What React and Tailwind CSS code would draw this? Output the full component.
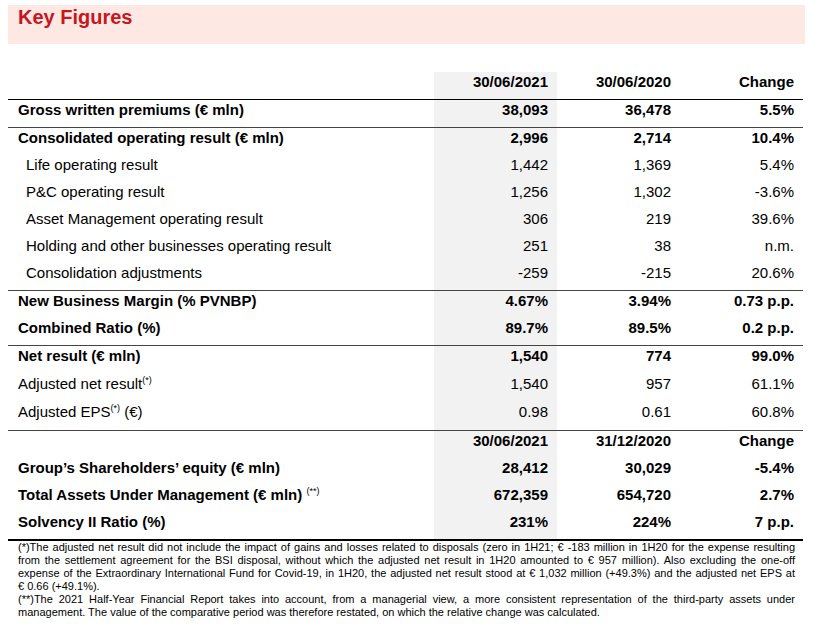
import React from 'react';

const rows = [
  { section: 'head', cells: ['', '30/06/2021', '30/06/2020', 'Change'], bold: true, h: 'h-[28px]', border: 'border-b border-black' },
  { label: 'Gross written premiums (€ mln)', cells: ['38,093', '36,478', '5.5%'], bold: true, h: 'h-[28px]', border: 'border-b border-[#444]' },
  { label: 'Consolidated operating result (€ mln)', cells: ['2,996', '2,714', '10.4%'], bold: true, h: 'h-[27px]' },
  { label: 'Life operating result', cells: ['1,442', '1,369', '5.4%'], indent: true, h: 'h-[27px]' },
  { label: 'P&C operating result', cells: ['1,256', '1,302', '-3.6%'], indent: true, h: 'h-[27px]' },
  { label: 'Asset Management operating result', cells: ['306', '219', '39.6%'], indent: true, h: 'h-[27px]' },
  { label: 'Holding and other businesses operating result', cells: ['251', '38', 'n.m.'], indent: true, h: 'h-[27px]' },
  { label: 'Consolidation adjustments', cells: ['-259', '-215', '20.6%'], indent: true, h: 'h-[28px]', border: 'border-b border-[#444]' },
  { label: 'New Business Margin (% PVNBP)', cells: ['4.67%', '3.94%', '0.73 p.p.'], bold: true, h: 'h-[27px]' },
  { label: 'Combined Ratio (%)', cells: ['89.7%', '89.5%', '0.2 p.p.'], bold: true, h: 'h-[28px]', border: 'border-b border-[#444]' },
  { label: 'Net result (€ mln)', cells: ['1,540', '774', '99.0%'], bold: true, h: 'h-[28px]' },
  { label: 'Adjusted net result', sup: '(*)', cells: ['1,540', '957', '61.1%'], h: 'h-[28px]' },
  { label: 'Adjusted EPS', sup: '(*)', after: ' (€)', cells: ['0.98', '0.61', '60.8%'], h: 'h-[29px]', border: 'border-b border-[#444]' },
  { label: '', cells: ['30/06/2021', '31/12/2020', 'Change'], bold: true, h: 'h-[27px]' },
  { label: 'Group’s Shareholders’ equity (€ mln)', cells: ['28,412', '30,029', '-5.4%'], bold: true, h: 'h-[27px]' },
  { label: 'Total Assets Under Management (€ mln) ', sup: '(**)', cells: ['672,359', '654,720', '2.7%'], bold: true, h: 'h-[27px]' },
  { label: 'Solvency II Ratio (%)', cells: ['231%', '224%', '7 p.p.'], bold: true, h: 'h-[29px]', border: 'border-b-2 border-black' },
];

const notes = [
  { text: '(*)The adjusted net result did not include the impact of gains and losses related to disposals (zero in 1H21; € -183 million in 1H20 for the expense resulting', full: true },
  { text: 'from the settlement agreement for the BSI disposal, without which the adjusted net result in 1H20 amounted to € 957 million). Also excluding the one-off', full: true },
  { text: 'expense of the Extraordinary International Fund for Covid-19, in 1H20, the adjusted net result stood at € 1,032 million (+49.3%) and the adjusted net EPS at', full: true },
  { text: '€ 0.66 (+49.1%).' },
  { text: '(**)The 2021 Half-Year Financial Report takes into account, from a managerial view, a more consistent representation of the third-party assets under', full: true },
  { text: 'management. The value of the comparative period was therefore restated, on which the relative change was calculated.' },
];

export default function App() {
  return (
    <div className="w-[813px] h-[630px] bg-white text-black font-['Liberation_Sans',Arial,sans-serif] overflow-hidden">
      {/* Title band */}
      <div className="pt-[5px] px-[8px]">
        <div className="h-[39px] bg-[#fde8e4] pl-[10px] pt-[1px]">
          <h1 className="text-[20px] leading-[23px] font-bold text-[#c8161d]">Key Figures</h1>
        </div>
      </div>

      {/* Table */}
      <div className="mt-[28px] ml-[8px] w-[795px]">
        {rows.map((row, i) => (
          <div key={i} className={`flex ${row.h} ${row.border || ''}`}>
            <div
              className={`w-[426px] pt-px text-[15px] leading-[17px] ${row.bold ? 'font-bold' : ''} ${row.indent ? 'pl-[18px]' : 'pl-[10px]'}`}
            >
              {row.label}
              {row.sup && <span className="relative -top-[6px] text-[9px] font-normal">{row.sup}</span>}
              {row.after}
            </div>
            {row.cells.slice(row.section === 'head' ? 1 : 0).map((c, j) => (
              <div
                key={j}
                className={`w-[123px] pt-px pr-[9px] text-right text-[15px] leading-[17px] ${row.bold ? 'font-bold' : ''} ${j === 0 ? 'bg-[#f2f2f2]' : ''}`}
              >
                {c}
              </div>
            ))}
          </div>
        ))}
      </div>

      {/* Footnotes */}
      <div className="pl-[18px] w-[795px] text-[11px] leading-[13px] font-['Liberation_Sans_Narrow','Liberation_Sans',Arial,sans-serif]">
        {notes.map((n, i) => (
          <div key={i} className={n.full ? 'text-justify [text-align-last:justify]' : ''}>
            {n.text}
          </div>
        ))}
      </div>
    </div>
  );
}
